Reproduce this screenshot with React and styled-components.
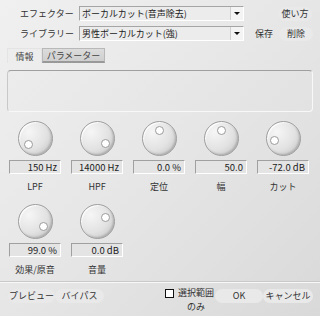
import styled, { createGlobalStyle } from "styled-components";

const GlobalStyle = createGlobalStyle`
  html, body {
    margin: 0;
    padding: 0;
  }
  body {
    font-family: "Noto Sans CJK JP", "DejaVu Sans", sans-serif;
    font-size: 9px;
    color: #333;
  }
`;

const Window = styled.div`
  width: 320px;
  height: 316px;
  box-sizing: border-box;
  background: linear-gradient(135deg, #f0f0f0 0%, #e6e6e6 50%, #d9d9d9 100%);
  padding: 6px 7px 0 7px;
  display: flex;
  flex-direction: column;
  overflow: hidden;
`;

const Row = styled.div`
  display: flex;
  align-items: center;
  height: 15px;
  margin-bottom: 5px;
`;

const Label = styled.div`
  width: 72px;
  padding-left: 13px;
  box-sizing: border-box;
  line-height: 15px;
  font-size: 9px;
  color: #333;
  white-space: nowrap;
`;

const Select = styled.div`
  width: 165px;
  height: 15px;
  box-sizing: border-box;
  border: 1px solid;
  border-color: #a5a5a5 #fff #fff #a5a5a5;
  background: #ececec;
  display: flex;
  align-items: center;
  padding-left: 2px;
  font-size: 9px;
  line-height: 13px;
  color: #222;
`;

const SelectText = styled.span`
  flex: 1;
  white-space: nowrap;
  overflow: hidden;
`;

const Arrow = styled.span`
  width: 12px;
  height: 13px;
  background: #f4f4f4;
  border-left: 1px solid #d0d0d0;
  display: flex;
  align-items: center;
  justify-content: center;
  &::after {
    content: "";
    border-left: 3px solid transparent;
    border-right: 3px solid transparent;
    border-top: 3px solid #111;
  }
`;

const Pill = styled.div`
  height: 14px;
  width: ${(p) => p.$w}px;
  margin-left: ${(p) => p.$ml || 0}px;
  border-radius: 7px;
  background: ${(p) => (p.$flat ? "transparent" : "#e9e9e9")};
  display: flex;
  align-items: center;
  justify-content: center;
  font-size: 9px;
  line-height: 14px;
  color: #333;
  white-space: nowrap;
`;

const Tabs = styled.div`
  display: flex;
  height: 15px;
  margin-top: 2px;
`;

const Tab = styled.div`
  width: ${(p) => p.$w}px;
  box-sizing: border-box;
  display: flex;
  align-items: center;
  justify-content: center;
  font-size: 9px;
  color: #444;
  white-space: nowrap;
  ${(p) =>
    p.$active
      ? `background: #ededed; border: 1px solid #e4e4e4; border-bottom: none;`
      : `background: linear-gradient(#dcdcdc, #cfcfcf); border: 1px solid #b8b8b8; border-bottom: 2px solid #999;`}
`;

const Panel = styled.div`
  margin-top: 7px;
  height: 42px;
  width: 306px;
  box-sizing: border-box;
  border: 1px solid #c8c8c8;
  border-top-color: #9f9f9f;
  border-right-color: #f8f8f8;
  border-bottom-color: #f8f8f8;
  border-radius: 4px;
  background: linear-gradient(135deg, #ececec, #e2e2e2);
`;

const KnobGrid = styled.div`
  display: grid;
  grid-template-columns: repeat(5, 62px);
  margin-left: -3px;
  margin-top: 9px;
  row-gap: 10px;
`;

const Cell = styled.div`
  display: flex;
  flex-direction: column;
  align-items: center;
`;

const KnobBody = styled.div`
  position: relative;
  width: 33px;
  height: 33px;
  border-radius: 50%;
  border: 1px solid #9e9e9e;
  background: radial-gradient(circle at 30% 30%, #f6f6f6 0%, #e2e2e2 55%, #bdbdbd 100%);
  box-shadow: inset -1px -1px 2px rgba(0, 0, 0, 0.18), inset 1px 1px 1px #fff;
`;

const Dot = styled.span`
  position: absolute;
  width: 7px;
  height: 7px;
  margin: -4px 0 0 -4px;
  border-radius: 50%;
  background: #fff;
  border: 1px solid #9a9a9a;
`;

const ValueBox = styled.div`
  margin-top: 4px;
  width: 52px;
  height: 14px;
  box-sizing: border-box;
  border: 1px solid;
  border-color: #a0a0a0 #fff #fff #a0a0a0;
  background: #e4e4e4;
  text-align: right;
  padding-right: 3px;
  font-size: 9.5px;
  line-height: 12px;
  color: #222;
  white-space: nowrap;
`;

const KnobLabel = styled.div`
  margin-top: 6px;
  font-size: 9px;
  line-height: 14px;
  color: #333;
  white-space: nowrap;
`;

const Footer = styled.div`
  margin-top: auto;
  border-top: 1px solid #c9c9c9;
  box-shadow: inset 0 1px 0 #f8f8f8;
  margin-left: -7px;
  margin-right: -7px;
  padding: 7px 7px 0 8px;
  height: 27px;
  display: flex;
  align-items: flex-start;
`;

const Check = styled.div`
  margin-left: 61px;
  display: flex;
  align-items: flex-start;
`;

const Box = styled.span`
  width: 7px;
  height: 7px;
  border: 1px solid #111;
  background: #fff;
  margin-top: 0px;
`;

const CheckText = styled.div`
  margin-left: 4px;
  width: 36px;
  font-size: 9px;
  line-height: 14px;
  color: #333;
  margin-top: -3px;
  text-align: center;
  white-space: nowrap;
`;

const knobs = [
  { value: "150 Hz", label: "LPF", angle: -125 },
  { value: "14000 Hz", label: "HPF", angle: 122 },
  { value: "0.0 %", label: "定位", angle: 0 },
  { value: "50.0", label: "幅", angle: 0 },
  { value: "-72.0 dB", label: "カット", angle: -98 },
  { value: "99.0 %", label: "効果/原音", angle: 120 },
  { value: "0.0 dB", label: "音量", angle: 58 },
];

const Knob = ({ angle }) => {
  const r = (angle * Math.PI) / 180;
  const x = 16.5 + Math.sin(r) * 9;
  const y = 16.5 - Math.cos(r) * 9;
  return (
    <KnobBody>
      <Dot style={{ left: x, top: y }} />
    </KnobBody>
  );
};

const App = () => {
  return (
    <Window>
      <GlobalStyle />
      <Row>
        <Label>エフェクター</Label>
        <Select>
          <SelectText>ボーカルカット(音声除去)</SelectText>
          <Arrow />
        </Select>
        <Pill $w={34} $ml={34}>使い方</Pill>
      </Row>
      <Row>
        <Label>ライブラリー</Label>
        <Select>
          <SelectText>男性ボーカルカット(強)</SelectText>
          <Arrow />
        </Select>
        <Pill $w={30} $ml={5} $flat>保存</Pill>
        <Pill $w={34} $ml={0}>削除</Pill>
      </Row>
      <Tabs>
        <Tab $w={35} $active>情報</Tab>
        <Tab $w={63}>パラメーター</Tab>
      </Tabs>
      <Panel />
      <KnobGrid>
        {knobs.map((k) => (
          <Cell key={k.label}>
            <Knob angle={k.angle} />
            <ValueBox>{k.value}</ValueBox>
            <KnobLabel>{k.label}</KnobLabel>
          </Cell>
        ))}
      </KnobGrid>
      <Footer>
        <Pill $w={47}>プレビュー</Pill>
        <Pill $w={49}>バイパス</Pill>
        <Check>
          <Box />
          <CheckText>
            選択範囲
            <br />
            のみ
          </CheckText>
        </Check>
        <Pill $w={48} $ml={1}>OK</Pill>
        <Pill $w={50}>キャンセル</Pill>
      </Footer>
    </Window>
  );
};

export default App;
